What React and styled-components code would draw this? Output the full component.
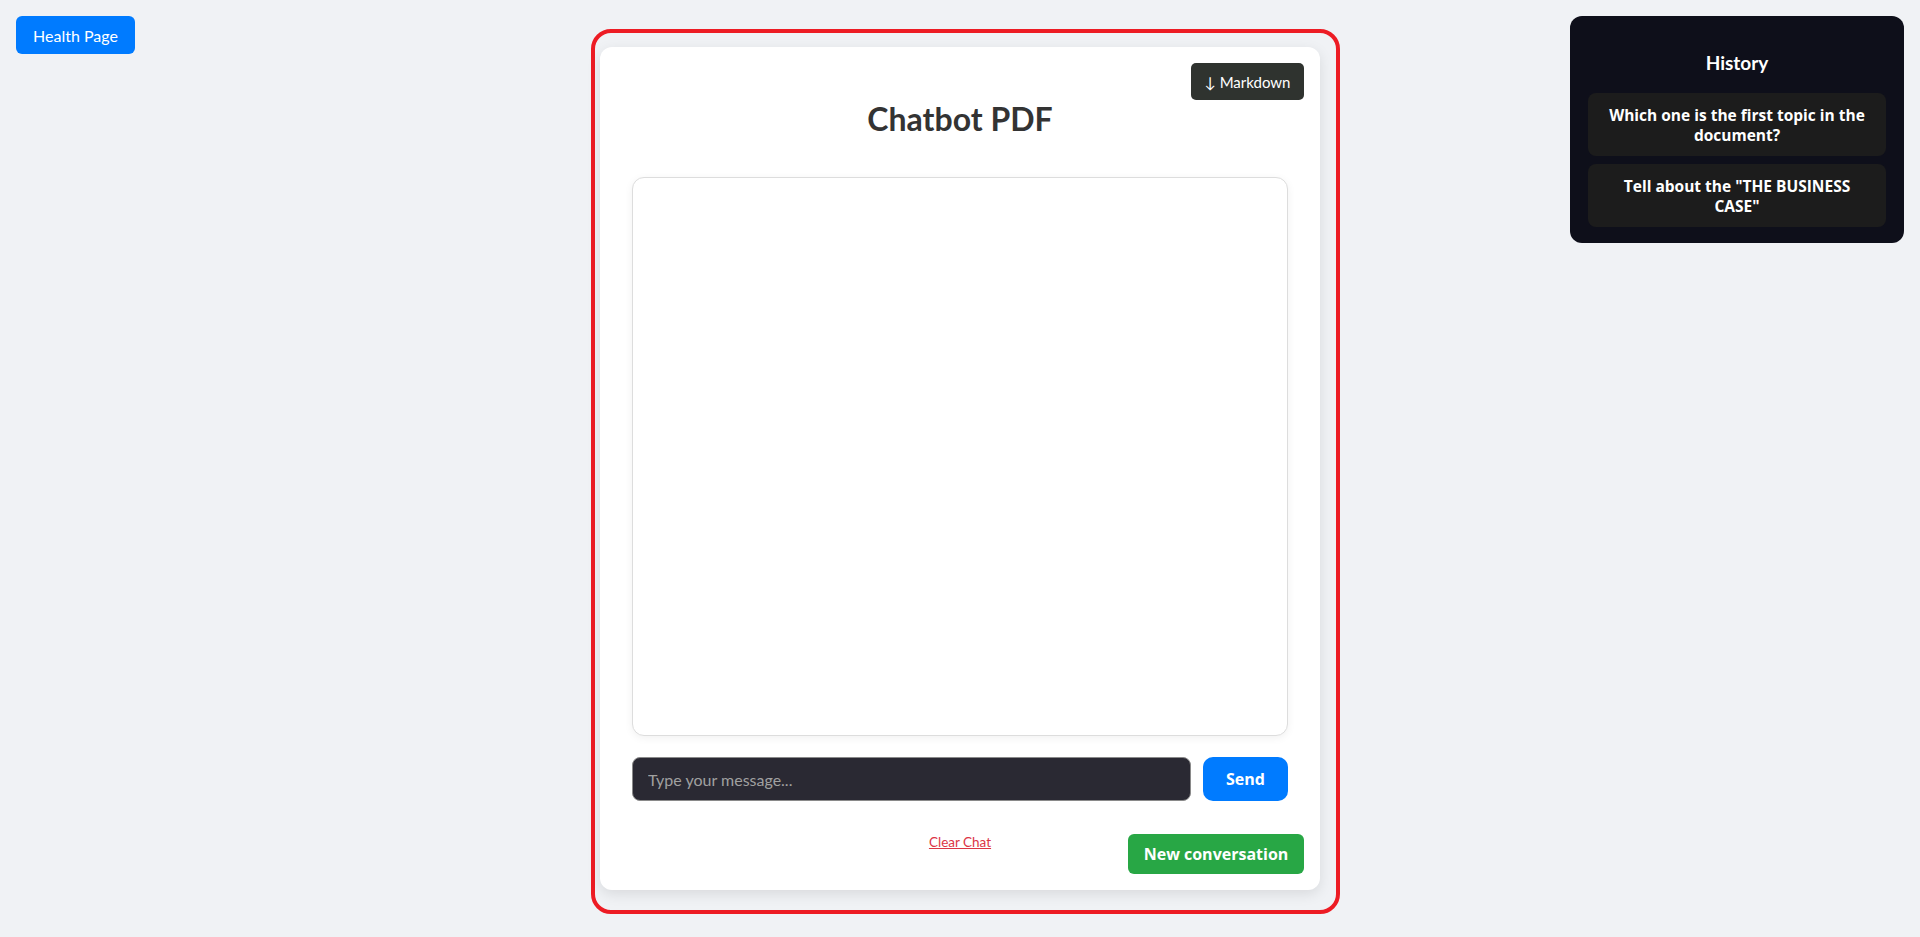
import React, { useState } from "react";
import styled, { createGlobalStyle } from "styled-components";

const history = [
  "Which one is the first topic in the document?",
  'Tell about the "THE BUSINESS CASE"',
];

const App = () => {
  const [message, setMessage] = useState("");

  return (
    <>
      <GlobalStyle />
      <Page>
        <LeftSide>
          <HealthButton>Health Page</HealthButton>
        </LeftSide>

        <Frame>
          <Card>
            <MarkdownButton>↓ Markdown</MarkdownButton>
            <Title>Chatbot PDF</Title>
            <ChatBox />
            <InputRow>
              <MessageInput
                type="text"
                placeholder="Type your message..."
                value={message}
                onChange={(e) => setMessage(e.target.value)}
              />
              <SendButton>Send</SendButton>
            </InputRow>
            <ClearChat href="#">Clear Chat</ClearChat>
            <NewConversation>New conversation</NewConversation>
          </Card>
        </Frame>

        <RightSide>
          <HistoryPanel>
            <HistoryTitle>History</HistoryTitle>
            <HistoryList>
              {history.map((item) => (
                <HistoryItem key={item}>{item}</HistoryItem>
              ))}
            </HistoryList>
          </HistoryPanel>
        </RightSide>
      </Page>
    </>
  );
};

export default App;

const GlobalStyle = createGlobalStyle`
  html, body {
    margin: 0;
    padding: 0;
    background: #f0f2f5;
    font-family: Lato, "Open Sans", sans-serif;
  }
  * {
    box-sizing: border-box;
  }
`;

const Page = styled.div`
  width: 100%;
  min-height: 937px;
  display: grid;
  grid-template-columns: 1fr auto 1fr;
  align-items: start;
`;

const LeftSide = styled.div`
  padding: 16px;
`;

const RightSide = styled.div`
  padding: 16px;
  display: flex;
  justify-content: flex-end;
`;

const HealthButton = styled.button`
  width: 119px;
  height: 38px;
  border: none;
  border-radius: 6px;
  background: #007bff;
  color: #fff;
  font-family: Lato, sans-serif;
  font-size: 16px;
  cursor: pointer;
`;

const Frame = styled.div`
  margin: 29px 0 0 11px;
  border: 4px solid #ed1c24;
  border-radius: 20px;
  padding: 14px 16px 20px 5px;
`;

const Card = styled.div`
  position: relative;
  width: 720px;
  background: #fff;
  border-radius: 12px;
  box-shadow: 0 4px 14px rgba(0, 0, 0, 0.1);
  padding: 32px 32px 32px;
  display: flex;
  flex-direction: column;
`;

const MarkdownButton = styled.button`
  position: absolute;
  top: 16px;
  right: 16px;
  width: 113px;
  height: 37px;
  border: none;
  border-radius: 5px;
  background: #2f332f;
  color: #fff;
  font-family: Lato, sans-serif;
  font-size: 15px;
  cursor: pointer;
`;

const Title = styled.h1`
  margin: 20px 0 38px;
  font-size: 32px;
  line-height: 40px;
  font-weight: 700;
  color: #333;
  text-align: center;
`;

const ChatBox = styled.div`
  height: 559px;
  border: 1px solid #ddd;
  border-radius: 12px;
  background: #fff;
  box-shadow: 0 2px 8px rgba(0, 0, 0, 0.06);
`;

const InputRow = styled.div`
  margin-top: 21px;
  display: flex;
  gap: 12px;
`;

const MessageInput = styled.input`
  flex: 1;
  height: 44px;
  border: 1px solid #8a8a8a;
  border-radius: 8px;
  background: #2a2933;
  color: #fff;
  padding: 0 15px;
  font-family: Lato, sans-serif;
  font-size: 16px;
  outline: none;
  &::placeholder {
    color: #a0a0a0;
  }
`;

const SendButton = styled.button`
  width: 85px;
  height: 44px;
  border: none;
  border-radius: 10px;
  background: #007bff;
  color: #fff;
  font-family: "Open Sans", sans-serif;
  font-size: 16px;
  font-weight: 700;
  cursor: pointer;
`;

const ClearChat = styled.a`
  align-self: center;
  margin: 32px 0 7px;
  font-size: 13.5px;
  line-height: 18px;
  color: #dc3545;
  text-decoration: underline;
`;

const NewConversation = styled.button`
  position: absolute;
  right: 16px;
  bottom: 16px;
  width: 176px;
  height: 40px;
  border: none;
  border-radius: 6px;
  background: #28a745;
  color: #fff;
  font-family: "Open Sans", sans-serif;
  font-size: 16px;
  font-weight: 700;
  cursor: pointer;
`;

const HistoryPanel = styled.div`
  width: 334px;
  background: #0e0f1a;
  border-radius: 12px;
  padding: 18px 18px 16px;
`;

const HistoryTitle = styled.h3`
  margin: 17px 0 18px;
  font-size: 19px;
  line-height: 24px;
  font-weight: 700;
  color: #fff;
  text-align: center;
`;

const HistoryList = styled.div`
  display: flex;
  flex-direction: column;
  gap: 8px;
`;

const HistoryItem = styled.div`
  background: #1c1c1c;
  border-radius: 8px;
  padding: 11.5px 16px;
  color: #fff;
  font-family: "Open Sans", sans-serif;
  font-size: 15.5px;
  line-height: 20px;
  font-weight: 700;
  text-align: center;
  cursor: pointer;
`;
